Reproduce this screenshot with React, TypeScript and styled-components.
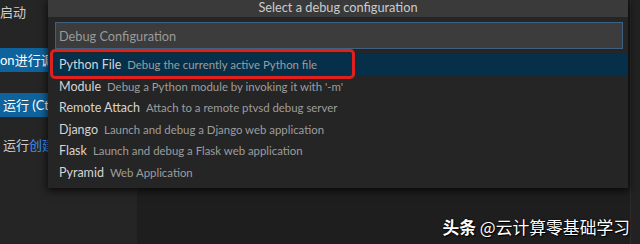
import styled, { createGlobalStyle } from 'styled-components';

const GlobalStyle = createGlobalStyle`
	html, body {
		margin: 0;
		padding: 0;
		background: #1e1e1e;
	}
	* {
		box-sizing: border-box;
	}
`;

// 디버그 구성 목록
const configs = [
	{ label: 'Python File', description: 'Debug the currently active Python file' },
	{ label: 'Module', description: "Debug a Python module by invoking it with '-m'" },
	{ label: 'Remote Attach', description: 'Attach to a remote ptvsd debug server' },
	{ label: 'Django', description: 'Launch and debug a Django web application' },
	{ label: 'Flask', description: 'Launch and debug a Flask web application' },
	{ label: 'Pyramid', description: 'Web Application' },
];

const App = () => {
	return (
		<>
			<GlobalStyle />
			<Workbench>
				<Sidebar>
					<SideText>启动</SideText>
					<SideButton $top={24}>on进行调试</SideButton>
					<SideButton $top={21} $indent={3}>运行 (Ctrl+F5)</SideButton>
					<SideText $top={16} $indent={3}>
						运行<Link>创建</Link>
					</SideText>
				</Sidebar>
				<Editor>
					<RightRail />
				</Editor>

				<QuickPick>
					<Title>Select a debug configuration</Title>
					<InputBox>Debug Configuration</InputBox>
					<List>
						{configs.map((item, idx) => (
							<Row key={item.label} $selected={idx === 0}>
								<Label>{item.label}</Label>
								<Description>{item.description}</Description>
							</Row>
						))}
					</List>
				</QuickPick>

				{/* 강조 표시용 빨간 박스 */}
				<Highlight />

				<Watermark>
					<b>头条</b> @云计算零基础学习
				</Watermark>
			</Workbench>
		</>
	);
};

export default App;

const Workbench = styled.div`
	position: relative;
	display: flex;
	width: 640px;
	height: 244px;
	overflow: hidden;
	font-family: Lato, 'Noto Sans CJK SC', sans-serif;
`;
const Sidebar = styled.div`
	width: 137px;
	flex-shrink: 0;
	display: flex;
	flex-direction: column;
	align-items: flex-start;
	background: #252526;
	color: #cccccc;
	font-size: 13px;
`;
const SideText = styled.div<{ $top?: number; $indent?: number }>`
	height: 24px;
	line-height: 24px;
	margin-top: ${(props) => props.$top || 0}px;
	padding-left: ${(props) => props.$indent || 0}px;
	white-space: nowrap;
`;
const Link = styled.span`
	color: #3794ff;
`;
const SideButton = styled.div<{ $top?: number; $indent?: number }>`
	width: 130px;
	height: 24px;
	line-height: 24px;
	margin-top: ${(props) => props.$top || 0}px;
	padding-left: ${(props) => props.$indent || 0}px;
	background: #0e639c;
	color: #ffffff;
	white-space: nowrap;
	overflow: hidden;
`;
const Editor = styled.div`
	flex: 1;
	display: flex;
	justify-content: flex-end;
	background: #1e1e1e;
`;
const RightRail = styled.div`
	width: 10px;
	height: 100%;
	background: #222222;
	border-left: 1px solid #2b2b2b;
`;
const QuickPick = styled.div`
	position: absolute;
	left: 48px;
	top: 0;
	width: 580px;
	height: 188px;
	display: flex;
	flex-direction: column;
	background: #252526;
	box-shadow: 0 2px 8px 1px rgba(0, 0, 0, 0.7);
	color: #cccccc;
`;
const Title = styled.div`
	height: 17px;
	line-height: 15px;
	background: #3a3a3b;
	text-align: center;
	font-size: 12.75px;
	color: #cccccc;
`;
const InputBox = styled.div`
	height: 27px;
	margin: 5px 5px 0 7px;
	padding: 2px 0 0 3px;
	line-height: 23px;
	background: #3c3c3c;
	border: 1px solid #3f6080;
	color: #9a9a9a;
	font-size: 12.75px;
`;
const List = styled.div`
	display: flex;
	flex-direction: column;
	margin-top: 5px;
`;
const Row = styled.div<{ $selected?: boolean }>`
	display: flex;
	align-items: baseline;
	height: 21.6px;
	padding: 3px 0 0 11px;
	background: ${(props) => (props.$selected ? '#062f4a' : 'transparent')};
	white-space: nowrap;
`;
const Label = styled.span`
	font-size: 12.5px;
	color: #d4d4d4;
`;
const Description = styled.span`
	margin-left: 6px;
	font-size: 11.4px;
	color: #9d9d9d;
`;
const Highlight = styled.div`
	position: absolute;
	left: 50px;
	top: 49px;
	width: 305px;
	height: 30px;
	border: 3px solid #e0201c;
	border-radius: 5px;
`;
const Watermark = styled.div`
	position: absolute;
	right: 10px;
	bottom: 5px;
	color: #ffffff;
	font-size: 16.8px;
	font-family: 'Noto Sans CJK SC', sans-serif;
	text-shadow: 0 0 2px #000000, 1px 1px 1px #000000;
	b {
		font-weight: 700;
	}
`;
